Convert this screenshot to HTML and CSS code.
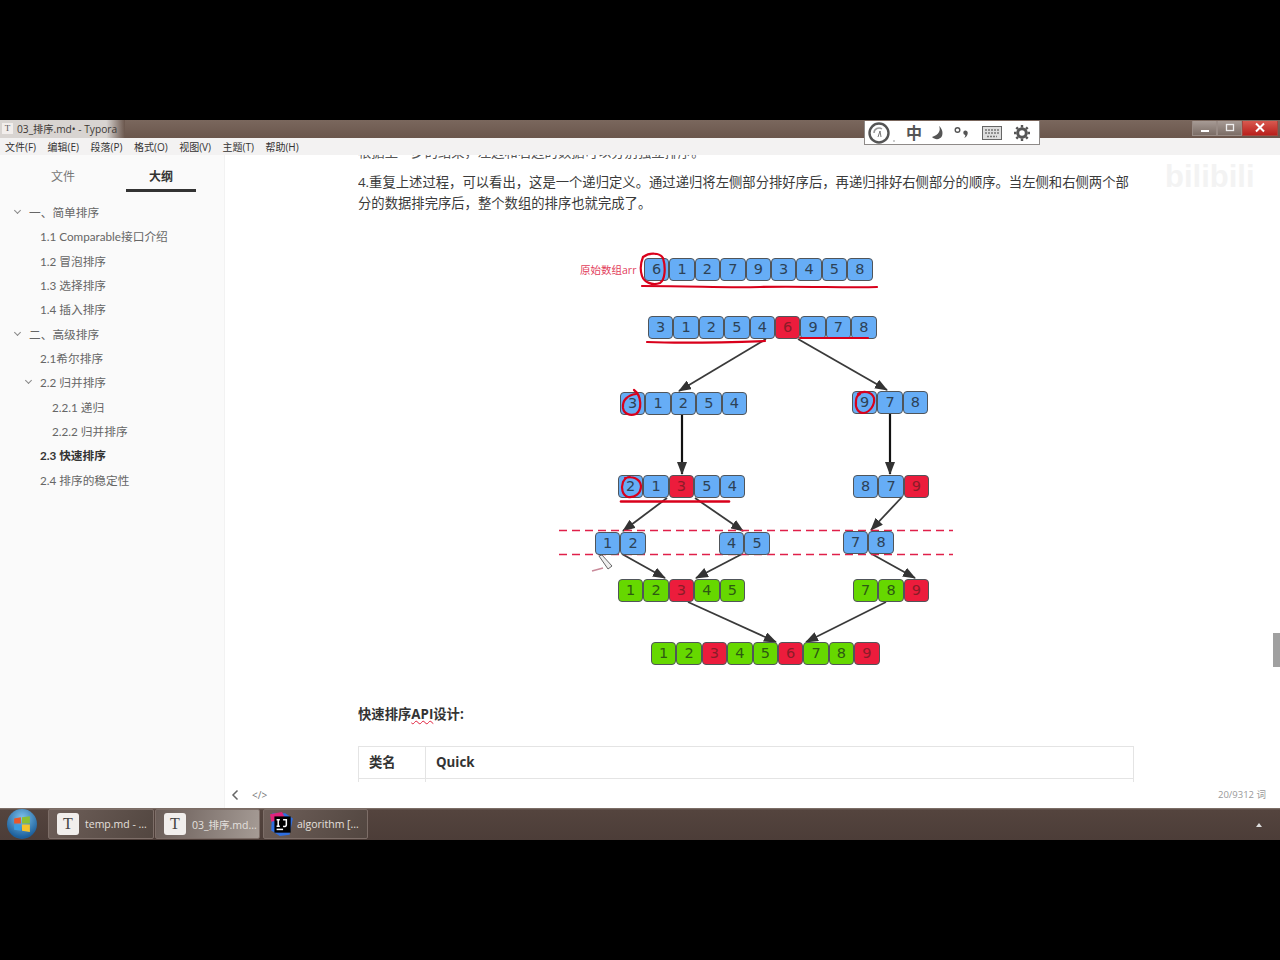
FILE: index.html
```html
<!DOCTYPE html>
<html lang="zh">
<head>
    <meta charset="UTF-8">
    <title>03_排序.md - Typora</title>
    <link rel="stylesheet" href="styles.css">
</head>
<body>
    <div class="band"></div>
    <div class="window">
        <div class="titlebar">
            <div class="title-glass">
                <span class="app-icon">T</span>
                <span>03_排序.md• - Typora</span>
            </div>
            <div class="win-controls">
                <span class="win-btn"><svg width="14" height="12" viewBox="0 0 14 12"><path d="M3 9h8" stroke="#fff" stroke-width="2"/></svg></span>
                <span class="win-btn"><svg width="14" height="12" viewBox="0 0 14 12"><rect x="3.500" y="2.500" width="7" height="6" fill="none" stroke="#eee" stroke-width="1.300"/></svg></span>
                <span class="win-btn win-close"><svg width="14" height="12" viewBox="0 0 14 12"><path d="M3 1.500l8 8M11 1.500l-8 8" stroke="#fff" stroke-width="2"/></svg></span>
            </div>
        </div>
        <div class="menubar">
            <span>文件(F)</span><span>编辑(E)</span><span>段落(P)</span><span>格式(O)</span><span>视图(V)</span><span>主题(T)</span><span>帮助(H)</span>
        </div>

        <div class="ime">
            <svg class="ime-clock" width="28" height="24" viewBox="0 0 28 24"><circle cx="11" cy="12" r="9.500" fill="#fff" stroke="#555" stroke-width="2.400"/><path d="M6 12a5 5 0 0 1 8-4" fill="none" stroke="#999" stroke-width="1.500"/><path d="M10 16l2-6 1 6" fill="none" stroke="#777"/><path d="M25 20h2" stroke="#999"/></svg>
            <span class="ime-zh">中</span>
            <svg width="16" height="18" viewBox="0 0 16 18"><path d="M10 2c2 4 0 9-7 11 3 3 8 3 10-1 1.500-4-.5-8-3-10z" fill="#555"/></svg>
            <svg width="18" height="18" viewBox="0 0 18 18"><circle cx="4.500" cy="6" r="2.300" fill="none" stroke="#555" stroke-width="1.400"/><path d="M12 6.500a2.500 2.500 0 0 1 2.700 3c-.3 2-1.500 3.500-3.500 4.500 1-1.500 1.200-2.500 1-3a2.300 2.300 0 0 1-.2-4.500z" fill="#555"/></svg>
            <svg class="ime-shift" width="20" height="14" viewBox="0 0 20 14"><rect x=".5" y=".5" width="19" height="13" fill="#ddd" stroke="#666"/><path d="M3 4h14M3 7h14M5 10.500h10" stroke="#777" stroke-width="1.500" stroke-dasharray="2 1"/></svg>
            <svg class="ime-shift" width="18" height="18" viewBox="0 0 18 18"><circle cx="9" cy="9" r="4.300" fill="none" stroke="#555" stroke-width="3"/><path d="M9 1v2.500M9 14.500V17M1 9h2.500M14.500 9H17M3.300 3.300l1.800 1.800M12.900 12.900l1.800 1.800M3.300 14.700l1.800-1.800M12.900 5.100l1.800-1.800" stroke="#555" stroke-width="2.400"/></svg>
        </div>

        <div class="workspace">
            <aside class="sidebar">
                <div class="tabs">
                    <span class="tab">文件</span>
                    <span class="tab tab-active">大纲</span>
                </div>
                <ul class="outline">
                    <li class="lv1"><i class="caret"></i>一、简单排序</li>
                    <li class="lv2">1.1 Comparable接口介绍</li>
                    <li class="lv2">1.2 冒泡排序</li>
                    <li class="lv2">1.3 选择排序</li>
                    <li class="lv2">1.4 插入排序</li>
                    <li class="lv1"><i class="caret"></i>二、高级排序</li>
                    <li class="lv2">2.1希尔排序</li>
                    <li class="lv2"><i class="caret"></i>2.2 归并排序</li>
                    <li class="lv3">2.2.1 递归</li>
                    <li class="lv3">2.2.2 归并排序</li>
                    <li class="lv2 current">2.3 快速排序</li>
                    <li class="lv2">2.4 排序的稳定性</li>
                </ul>
                <div class="side-footer">
                    <svg width="8" height="12" viewBox="0 0 8 12"><path d="M6.500 1.500L2 6l4.500 4.500" fill="none" stroke="#666" stroke-width="1.500"/></svg>
                    <span class="code-toggle">&lt;/&gt;</span>
                </div>
            </aside>

            <main class="editor">
                <div class="bilibili">bilibili</div>
                <div class="page">
                    <p class="para cut">根据上一步的结果，左边和右边的数据可以分别独立排序。</p>
                    <p class="para">4.重复上述过程，可以看出，这是一个递归定义。通过递归将左侧部分排好序后，再递归排好右侧部分的顺序。当左侧和右侧两个部分的数据排完序后，整个数组的排序也就完成了。</p>

                    <div class="diagram">
                        <svg class="diagram-lines" width="776" height="440" viewBox="358 245 776 440">
                            <defs>
                                <marker id="head" markerWidth="14" markerHeight="10" refX="12" refY="5" orient="auto" markerUnits="userSpaceOnUse">
                                    <path d="M0 0L13 5L0 10z" fill="#333"/>
                                </marker>
                            </defs>
                            <g stroke="#3a3a3a" stroke-width="1.800" fill="none">
                                <path d="M766 339L679 391" marker-end="url(#head)"/>
                                <path d="M798 339L887 390" marker-end="url(#head)"/>
                                <path d="M682 415V474" stroke="#111" stroke-width="2.200" marker-end="url(#head)"/>
                                <path d="M890 413V474" stroke="#111" stroke-width="2.200" marker-end="url(#head)"/>
                                <path d="M667 498L623 531" marker-end="url(#head)"/>
                                <path d="M695 498L743 531" marker-end="url(#head)"/>
                                <path d="M902 497L871 530" marker-end="url(#head)"/>
                                <path d="M622 554L665 578" marker-end="url(#head)"/>
                                <path d="M742 554L696 578" marker-end="url(#head)"/>
                                <path d="M870 553L915 578" marker-end="url(#head)"/>
                                <path d="M688 602L776 642" marker-end="url(#head)"/>
                                <path d="M886 602L806 642" marker-end="url(#head)"/>
                            </g>
                            <g stroke="#e0204a" stroke-width="1.500" stroke-dasharray="8 5" fill="none">
                                <path d="M559 530.500H953"/>
                                <path d="M559 554.500H953"/>
                            </g>
                        </svg>

                        <span class="origin-label">原始数组arr</span>

                        <div class="row row-a">
                            <b class="cell">6</b><b class="cell">1</b><b class="cell">2</b><b class="cell">7</b><b class="cell">9</b><b class="cell">3</b><b class="cell">4</b><b class="cell">5</b><b class="cell">8</b>
                        </div>
                        <div class="row row-b">
                            <b class="cell">3</b><b class="cell">1</b><b class="cell">2</b><b class="cell">5</b><b class="cell">4</b><b class="cell red">6</b><b class="cell">9</b><b class="cell">7</b><b class="cell">8</b>
                        </div>
                        <div class="row row-c">
                            <b class="cell">3</b><b class="cell">1</b><b class="cell">2</b><b class="cell">5</b><b class="cell">4</b>
                        </div>
                        <div class="row row-d">
                            <b class="cell">9</b><b class="cell">7</b><b class="cell">8</b>
                        </div>
                        <div class="row row-e">
                            <b class="cell">2</b><b class="cell">1</b><b class="cell red">3</b><b class="cell">5</b><b class="cell">4</b>
                        </div>
                        <div class="row row-f">
                            <b class="cell">8</b><b class="cell">7</b><b class="cell red">9</b>
                        </div>
                        <div class="row row-g">
                            <b class="cell">1</b><b class="cell">2</b>
                        </div>
                        <div class="row row-h">
                            <b class="cell">4</b><b class="cell">5</b>
                        </div>
                        <div class="row row-i">
                            <b class="cell">7</b><b class="cell">8</b>
                        </div>
                        <div class="row row-j">
                            <b class="cell green">1</b><b class="cell green">2</b><b class="cell red">3</b><b class="cell green">4</b><b class="cell green">5</b>
                        </div>
                        <div class="row row-k">
                            <b class="cell green">7</b><b class="cell green">8</b><b class="cell red">9</b>
                        </div>
                        <div class="row row-l">
                            <b class="cell green">1</b><b class="cell green">2</b><b class="cell red">3</b><b class="cell green">4</b><b class="cell green">5</b><b class="cell red">6</b><b class="cell green">7</b><b class="cell green">8</b><b class="cell red">9</b>
                        </div>

                        <svg class="diagram-ink" width="776" height="440" viewBox="358 245 776 440">
                            <g stroke="#d9001b" stroke-width="2.200" fill="none" stroke-linecap="round">
                                <path d="M642 286C700 286 720 288 760 287S850 288 877 287"/>
                                <path d="M647 342C670 343 710 343 765 341"/>
                                <path d="M800 338C820 338 850 338 868 338"/>
                                <path d="M643 257C650 252 660 253 663 258C666 268 665 280 660 283C652 286 644 282 642 276C640 270 641 262 643 257Z"/>
                                <path d="M634 390C642 396 642 410 636 414C630 416 624 414 623 408C622 400 628 395 636 394"/>
                                <path d="M858 394C864 390 872 392 874 398C875 405 870 412 864 413C858 413 855 408 856 401C856 398 858 395 860 394"/>
                                <path d="M625 478C632 476 640 478 641 486C641 494 634 498 628 497C622 495 621 488 623 482C625 478 628 477 630 477"/>
                                <path d="M621 501.500H729" stroke-width="2.600"/>
                            </g>
                            <path d="M592 571L603 568" stroke="#c98a9a" stroke-width="1.500"/>
                            <path d="M599 556L602 555L612 566L608 569Z" fill="#eee" stroke="#666"/>
                        </svg>
                    </div>

                    <p class="api-title">快速排序<span class="typo">API</span>设计:</p>

                    <table class="api-table">
                        <tr><th class="key">类名</th><th>Quick</th></tr>
                        <tr><td class="key"></td><td></td></tr>
                    </table>
                </div>
                <div class="word-count">20/9312 词</div>
                <div class="scroll-thumb"></div>
            </main>
        </div>
    </div>

    <div class="taskbar">
        <span class="start">
            <svg width="18" height="18" viewBox="0 0 16 16"><path d="M1 3l6-1v5.500H1z" fill="#e8562a"/><path d="M8 2l7-1v6.500H8z" fill="#8bc034"/><path d="M1 8.500h6V14l-6-1z" fill="#3a9be0"/><path d="M8 8.500h7V15l-7-1z" fill="#f5c32c"/></svg>
        </span>
        <div class="task"><span class="task-icon">T</span><span>temp.md - ...</span></div>
        <div class="task task-active"><span class="task-icon">T</span><span>03_排序.md...</span></div>
        <div class="task task-idea">
            <svg class="idea-icon" width="26" height="26" viewBox="0 0 24 24"><path d="M3 2h12l7 5-3 15-9 1-8-5z" fill="#2f6fe0"/><path d="M1 3l11-2 3 6-13 3z" fill="#e0247a"/><rect x="5" y="5" width="15" height="15" fill="#000"/><path d="M7 8h3M8.500 8v6M7 14h3M13 8h3v5c0 1-1 1.500-3 1" fill="none" stroke="#fff" stroke-width="1.400"/><path d="M7 17h6" stroke="#fff" stroke-width="1.400"/></svg>
            <span>algorithm [...</span>
        </div>
        <span class="tray-arrow"></span>
    </div>
    <div class="band band-bottom"></div>
</body>
</html>
```

FILE: styles.css
```css
* {
    box-sizing: border-box;
}

body {
    margin: 0;
    height: 960px;
    overflow: hidden;
    background-color: #000;
    font-family: "Open Sans", "Noto Sans CJK SC", sans-serif;
    color: #333;
}

.band {
    height: 120px;
    background-color: #000;
}

.window {
    position: relative;
    height: 688px;
    display: flex;
    flex-direction: column;
    background-color: #fff;
}

.titlebar {
    height: 18px;
    display: flex;
    justify-content: space-between;
    background: linear-gradient(#7a675d, #6a564c);
}

.title-glass {
    width: 125px;
    display: flex;
    align-items: center;
    gap: 4px;
    padding: 0 0 2px 2px;
    font-size: 10.200px;
    color: #3c3835;
    white-space: nowrap;
    background: linear-gradient(90deg, #d8d4d1 85%, #6a564c);
}

.app-icon {
    width: 11px;
    height: 11px;
    background-color: #f2eeec;
    color: #555;
    font-family: "Liberation Serif", serif;
    font-size: 9px;
    line-height: 11px;
    text-align: center;
}

.win-controls {
    display: flex;
    margin-right: 2px;
    height: 15px;
    margin-top: 1px;
}

.win-btn {
    width: 25px;
    display: flex;
    align-items: center;
    justify-content: center;
    background: linear-gradient(#a79b95, #7b6d66);
    border: 1px solid #998c86;
    border-top: none;
}

.win-close {
    width: 36px;
    background: linear-gradient(#d85a50, #b9201c);
    border-color: #a9443c;
}

.menubar {
    height: 17px;
    display: flex;
    align-items: center;
    gap: 11.500px;
    padding-left: 5px;
    background-color: #f3f2f2;
    font-size: 10px;
    color: #333;
}

.ime {
    position: absolute;
    left: 864px;
    top: 1px;
    width: 176px;
    height: 24px;
    display: flex;
    align-items: center;
    gap: 8px;
    padding-left: 3px;
    background-color: #fff;
    border: 1px solid #8e8a88;
    border-top: none;
}

.ime-clock {
    margin-right: 2px;
}

.ime-shift {
    margin-left: 3px;
}

.ime-zh {
    font-size: 16px;
    font-weight: 700;
    line-height: 20px;
    color: #555;
    margin-right: -1px;
}

.workspace {
    flex: 1;
    display: flex;
    min-height: 0;
}

.sidebar {
    position: relative;
    z-index: 3;
    width: 225px;
    flex: none;
    background-color: #fafafa;
    border-right: 1px solid #f2f2f2;
}

.tabs {
    display: flex;
    padding: 13px 28px 0 28px;
    justify-content: space-between;
}

.tab {
    width: 70px;
    height: 24px;
    text-align: center;
    font-size: 12px;
    line-height: 18px;
    color: #777;
}

.tab-active {
    color: #333;
    font-weight: 700;
    border-bottom: 3px solid #333;
}

.outline {
    list-style: none;
    margin: 8px 0 0;
    padding: 0;
    font-family: "Lato", "Noto Sans CJK SC", sans-serif;
    font-size: 11.700px;
    color: #666;
}

.outline li {
    position: relative;
    height: 24.350px;
    line-height: 24px;
}

.lv1 {
    padding-left: 29px;
}

.lv2 {
    padding-left: 40px;
}

.lv3 {
    padding-left: 52px;
}

.caret {
    position: absolute;
    margin-left: -14px;
    margin-top: 8px;
    width: 5px;
    height: 5px;
    border-right: 1.500px solid #888;
    border-bottom: 1.500px solid #888;
    transform: rotate(45deg);
}

.current {
    font-weight: 700;
    color: #333;
}

.side-footer {
    position: absolute;
    left: 231px;
    bottom: 6px;
    display: flex;
    align-items: center;
    gap: 13px;
    font-size: 10px;
    color: #777;
}

.editor {
    position: relative;
    flex: 1;
    overflow: hidden;
    background-color: #fff;
}

.bilibili {
    position: absolute;
    left: 940px;
    top: 4px;
    font-family: "Liberation Sans", sans-serif;
    font-size: 31px;
    font-weight: 700;
    color: #f3f3f3;
    z-index: 2;
}

.page {
    height: 627px;
    margin-left: 133px;
    width: 776px;
    overflow: hidden;
    font-size: 13.330px;
    line-height: 21px;
}

.para {
    margin: 0;
    color: #3a3a3a;
}

.cut {
    height: 4px;
    margin-bottom: 13px;
    overflow: hidden;
    white-space: nowrap;
    display: flex;
    align-items: flex-end;
    line-height: 13px;
    color: #555;
}

.diagram {
    position: relative;
    height: 440px;
    margin-top: 31px;
}

.diagram-lines,
.diagram-ink {
    position: absolute;
    left: 0;
    top: 0;
}

.origin-label {
    position: absolute;
    left: 222px;
    top: 17px;
    font-size: 10.500px;
    line-height: 16px;
    color: #e2405c;
}

.row {
    position: absolute;
    display: flex;
}

.cell {
    width: 25.400px;
    height: 23px;
    border: 1.800px solid #50555a;
    border-radius: 4px;
    background-color: #66adf6;
    color: #2d4256;
    font-family: "DejaVu Sans", sans-serif;
    font-weight: 400;
    font-size: 14.500px;
    line-height: 21px;
    text-align: center;
}

.red {
    background-color: #ec1c3c;
    color: #8a1c28;
}

.green {
    background-color: #66d800;
    color: #2d5a12;
}

.row-a { left: 286px; top: 13px; }
.row-b { left: 290px; top: 71px; }
.row-c { left: 262px; top: 147px; }
.row-d { left: 494px; top: 146px; }
.row-e { left: 260px; top: 230px; }
.row-f { left: 495px; top: 230px; }
.row-g { left: 237px; top: 287px; }
.row-h { left: 361px; top: 287px; }
.row-i { left: 485px; top: 286px; }
.row-j { left: 260px; top: 334px; }
.row-k { left: 495px; top: 334px; }
.row-l { left: 293px; top: 397px; }

.api-title {
    margin: 19px 0 0;
    font-weight: 700;
    color: #333;
}

.typo {
    text-decoration: underline wavy #e0203c 1px;
}

.api-table {
    width: 776px;
    margin-top: 21px;
    border-collapse: collapse;
}

.api-table th,
.api-table td {
    height: 32px;
    padding: 0 10px;
    text-align: left;
    border: 1px solid #e4e4e4;
}

.api-table .key {
    width: 67px;
}

.word-count {
    position: absolute;
    right: 14px;
    bottom: 5px;
    font-size: 9.500px;
    line-height: 16px;
    color: #999;
}

.scroll-thumb {
    position: absolute;
    right: 0;
    top: 478px;
    width: 7px;
    height: 34px;
    background-color: #a0a0a0;
}

.taskbar {
    height: 32px;
    display: flex;
    align-items: center;
    padding: 0 0 0 48px;
    gap: 1px;
    position: relative;
    background: linear-gradient(#887a72 0, #54443e 2px, #4c3d38);
}

.start {
    position: absolute;
    left: 7px;
    top: 1px;
    width: 30px;
    height: 30px;
    border-radius: 50%;
    display: flex;
    align-items: center;
    justify-content: center;
    background: radial-gradient(circle at 50% 30%, #7ec2ec, #1c5f9c 75%);
}

.task {
    width: 106px;
    height: 30px;
    display: flex;
    align-items: center;
    gap: 6px;
    padding-left: 8px;
    font-size: 10.500px;
    color: #e4e0de;
    background: linear-gradient(120deg, #6e5f59, #524640);
    border: 1px solid #7d6e68;
    border-radius: 2px;
}

.task-active {
    background: linear-gradient(100deg, #6a5d58, #a59b95);
    margin-right: 2px;
    width: 105px;
}

.task-icon {
    width: 22px;
    height: 22px;
    flex: none;
    background-color: #f1eeec;
    border-radius: 3px;
    color: #444;
    font-family: "Liberation Serif", serif;
    font-size: 16px;
    line-height: 22px;
    text-align: center;
}

.idea-icon {
    flex: none;
    margin-left: -3px;
}

.task-idea {
    gap: 2px;
    width: 105px;
}

.tray-arrow {
    position: absolute;
    right: 18px;
    top: 15px;
    border-left: 3px solid transparent;
    border-right: 3px solid transparent;
    border-bottom: 4px solid #ddd;
}

.band-bottom {
    height: 120px;
}
```
